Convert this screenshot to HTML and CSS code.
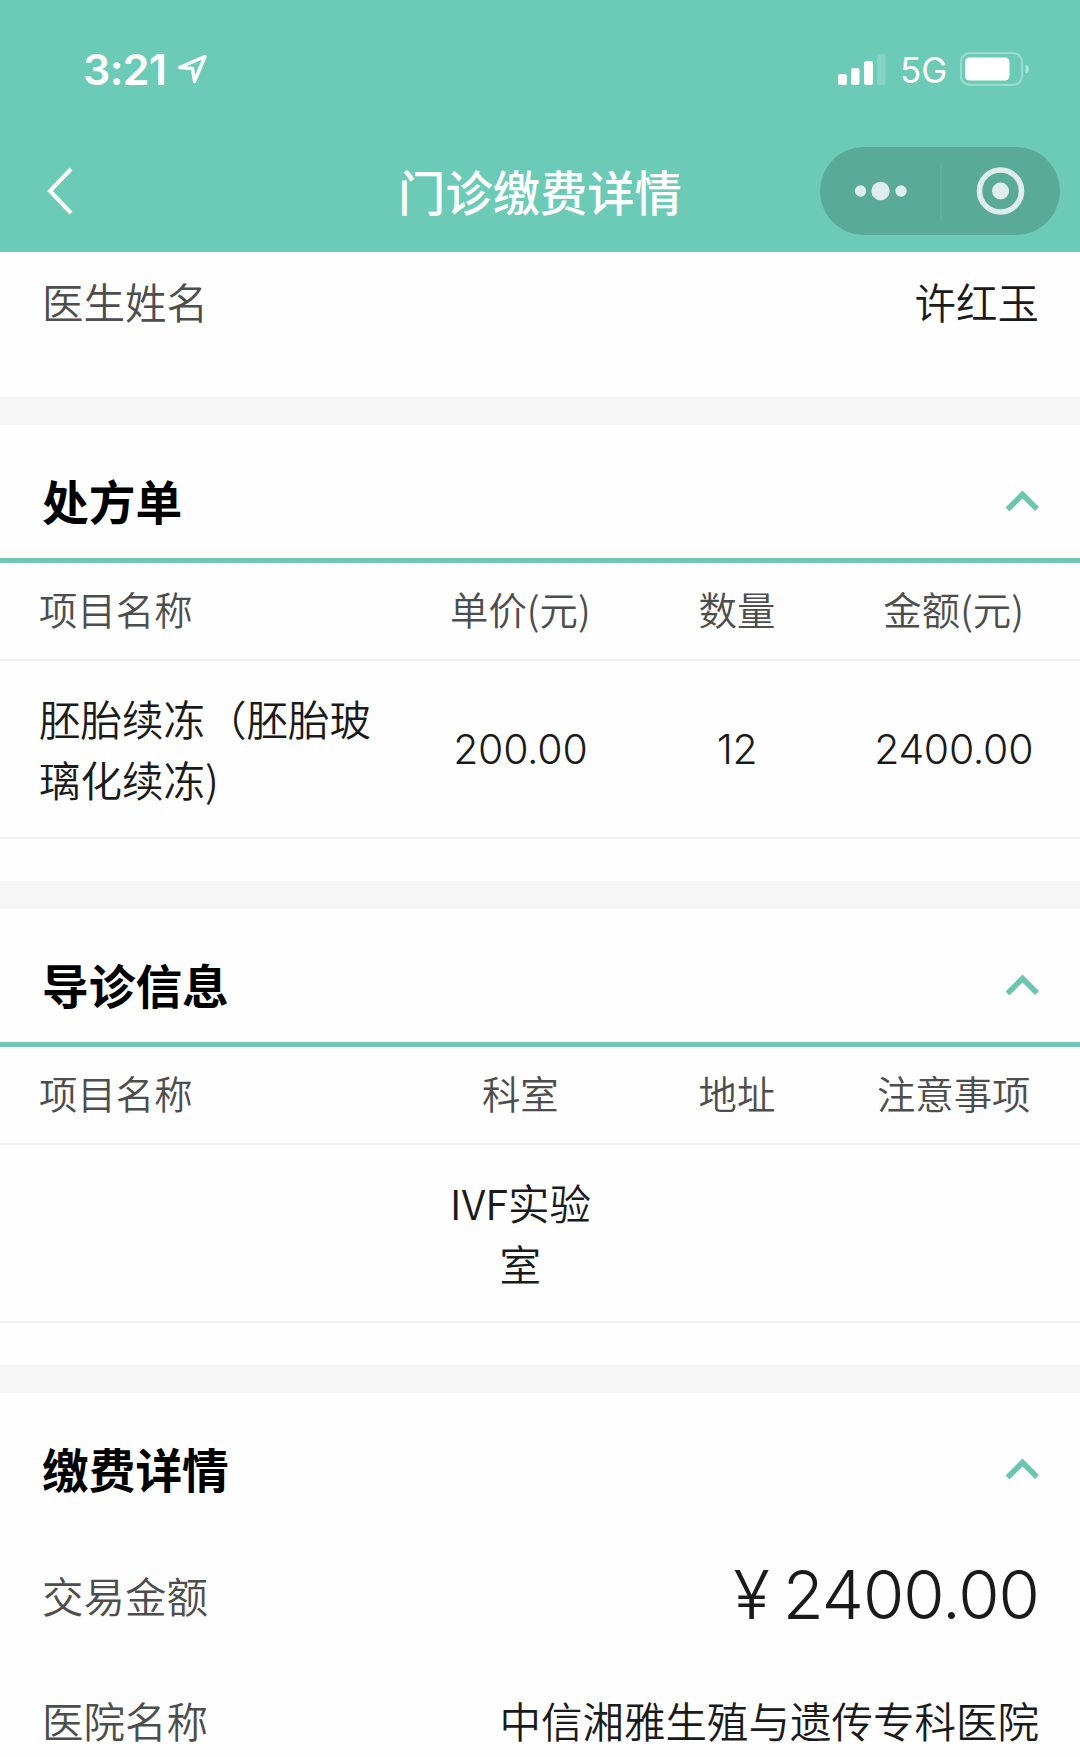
FILE: index.html
```html
<!DOCTYPE html>
<html lang="zh-CN">
<head>
    <meta charset="UTF-8">
    <meta name="viewport" content="width=device-width, initial-scale=1.0">
    <title>门诊缴费详情</title>
    <link rel="stylesheet" href="styles.css">
</head>
<body>
    <div class="page">
        <header class="top">
            <!-- 状态栏 -->
            <div class="status-bar">
                <div class="status-left">
                    <span class="clock">3:21</span>
                    <svg class="location" width="30" height="30" viewBox="0 0 30 30">
                        <path d="M2.500 13.500 L28 2.500 L17.500 27.500 L15.500 14.500 Z" fill="none" stroke="#fff" stroke-width="3.400" stroke-linejoin="round"/>
                    </svg>
                </div>
                <div class="status-right">
                    <svg class="signal" width="48" height="31" viewBox="0 0 48 31">
                        <rect x="0" y="20" width="9" height="11" rx="2.500" fill="#fff"/>
                        <rect x="13" y="14" width="8.500" height="17" rx="2.500" fill="#fff"/>
                        <rect x="26" y="7" width="9" height="24" rx="2.500" fill="#fff"/>
                        <rect x="39" y="0" width="8.500" height="31" rx="2.500" fill="#fff" opacity="0.180"/>
                    </svg>
                    <span class="network">5G</span>
                    <svg class="battery" width="70" height="34" viewBox="0 0 70 34">
                        <rect x="1" y="1.200" width="61" height="31.600" rx="8.500" fill="none" stroke="#fff" stroke-width="2.200" opacity="0.320"/>
                        <rect x="5" y="5.500" width="44.500" height="23" rx="4.500" fill="#fff"/>
                        <path d="M65.500 12.500 Q69 14 69 17 Q69 20 65.500 21.500 Z" fill="#fff" opacity="0.450"/>
                    </svg>
                </div>
            </div>

            <!-- 导航栏 -->
            <div class="nav-bar">
                <svg class="back" width="26" height="48" viewBox="0 0 26 48">
                    <path d="M24 2 L3 24 L24 46" fill="none" stroke="#fff" stroke-width="4"/>
                </svg>
                <h1>门诊缴费详情</h1>
                <div class="capsule">
                    <svg width="240" height="88" viewBox="0 0 240 88">
                        <g fill="#dfeeed">
                            <circle cx="40.500" cy="44" r="5.700"/>
                            <circle cx="60.500" cy="44" r="9.200"/>
                            <circle cx="81" cy="44" r="5.700"/>
                            <circle cx="180.500" cy="44" r="8.500"/>
                        </g>
                        <path d="M121 16 V72" stroke="#61b09e" stroke-width="2"/>
                        <circle cx="180.500" cy="44" r="21" fill="none" stroke="#dfeeed" stroke-width="5.500"/>
                    </svg>
                </div>
            </div>
        </header>

        <section class="doctor">
            <div class="info-row">
                <span class="label">医生姓名</span>
                <span class="value">许红玉</span>
            </div>
        </section>

        <!-- 处方单 -->
        <section class="card">
            <div class="card-title">
                <h2>处方单</h2>
                <svg class="arrow" width="34" height="22" viewBox="0 0 34 22">
                    <path d="M2.500 20.500 L17.500 5.500 L32 20" fill="none" stroke="#6ac6af" stroke-width="5.500"/>
                </svg>
            </div>
            <div class="table">
                <div class="row head">
                    <div>项目名称</div>
                    <div>单价(元)</div>
                    <div>数量</div>
                    <div>金额(元)</div>
                </div>
                <div class="row">
                    <div>胚胎续冻（胚胎玻璃化续冻)</div>
                    <div class="num">200.00</div>
                    <div class="num">12</div>
                    <div class="num">2400.00</div>
                </div>
            </div>
        </section>

        <!-- 导诊信息 -->
        <section class="card">
            <div class="card-title">
                <h2>导诊信息</h2>
                <svg class="arrow" width="34" height="22" viewBox="0 0 34 22">
                    <path d="M2.500 20.500 L17.500 5.500 L32 20" fill="none" stroke="#6ac6af" stroke-width="5.500"/>
                </svg>
            </div>
            <div class="table">
                <div class="row head">
                    <div>项目名称</div>
                    <div>科室</div>
                    <div>地址</div>
                    <div>注意事项</div>
                </div>
                <div class="row">
                    <div></div>
                    <div>IVF实验室</div>
                    <div></div>
                    <div></div>
                </div>
            </div>
        </section>

        <!-- 缴费详情 -->
        <section class="card payment">
            <div class="card-title">
                <h2>缴费详情</h2>
                <svg class="arrow" width="34" height="22" viewBox="0 0 34 22">
                    <path d="M2.500 20.500 L17.500 5.500 L32 20" fill="none" stroke="#6ac6af" stroke-width="5.500"/>
                </svg>
            </div>
            <div class="info-row">
                <span class="label">交易金额</span>
                <span class="amount"><span class="yen">¥</span>2400.00</span>
            </div>
            <div class="info-row">
                <span class="label">医院名称</span>
                <span class="value">中信湘雅生殖与遗传专科医院</span>
            </div>
        </section>
    </div>
</body>
</html>
```

FILE: styles.css
```css
* {
    margin: 0;
    padding: 0;
    box-sizing: border-box;
}

body {
    width: 1080px;
    height: 1757px;
    overflow: hidden;
    font-family: "Noto Sans CJK SC", sans-serif;
    font-size: 41.5px;
    font-weight: 350;
    color: #1a1a1a;
    background: #fefefe;
}

svg {
    display: block;
    flex-shrink: 0;
}

.top {
    height: 252px;
    color: #fff;
    background: #6bcbb6;
}

.status-bar {
    height: 138px;
    padding: 0 50px 0 83px;
    display: flex;
    align-items: center;
    justify-content: space-between;
    font-family: Inter, sans-serif;
}

.status-left,
.status-right {
    display: flex;
    align-items: center;
}

.clock {
    width: 94px;
    font-size: 43px;
    font-weight: 600;
    line-height: 50px;
    letter-spacing: -0.7px;
}

.network {
    width: 60px;
    margin-left: 14px;
    font-size: 35px;
    font-weight: 400;
    line-height: 44px;
    padding-top: 2px;
}

.nav-bar {
    height: 106px;
    padding: 0 20px 0 47px;
    display: grid;
    grid-template-columns: 240px 1fr 240px;
    align-items: center;
}

.nav-bar h1 {
    padding-right: 27px;
    font-size: 47.3px;
    font-weight: 500;
    line-height: 60px;
    text-align: center;
    white-space: nowrap;
}

.capsule {
    width: 240px;
    height: 88px;
    border-radius: 44px;
    background: #5aaa98;
}

.info-row {
    height: 125px;
    padding: 0 41px 0 42px;
    display: flex;
    align-items: center;
    justify-content: space-between;
}

.label {
    color: #4d4d4d;
}

.doctor {
    height: 145px;
}

.doctor .info-row {
    height: 97px;
}

.card {
    height: 484px;
    border-top: 28px solid #f6f6f6;
}

.card-title {
    height: 138px;
    padding: 17px 41px 0 42px;
    display: flex;
    align-items: center;
    justify-content: space-between;
    border-bottom: 5px solid #71c7b3;
}

.card-title h2 {
    font-size: 46.7px;
    font-weight: 700;
    line-height: 60px;
    color: #000;
}

.row {
    height: 178px;
    padding-right: 18px;
    display: grid;
    grid-template-columns: 412px repeat(3, 1fr);
    align-items: center;
    line-height: 61px;
    text-align: center;
    border-bottom: 2px solid #f3f3f3;
}

.row > div {
    padding: 0 20px;
}

.row > div:first-child {
    padding: 0 39px;
    text-align: left;
}

.row.head {
    height: 98px;
    padding-bottom: 5px;
    font-size: 38.4px;
    color: #4d4d4d;
}

.row .num {
    font-family: Inter, sans-serif;
    font-size: 41px;
    font-weight: 350;
    letter-spacing: -0.3px;
}

.payment {
    height: auto;
}

.payment .card-title {
    height: 133px;
    border-bottom: none;
}

.payment .info-row:nth-child(2) {
    height: 137px;
}

.payment .info-row:nth-child(3) {
    height: 113px;
}

.amount {
    font-family: Inter, sans-serif;
    font-size: 67px;
    font-weight: 350;
    letter-spacing: -1px;
}

.yen {
    margin-right: 14px;
}
```
